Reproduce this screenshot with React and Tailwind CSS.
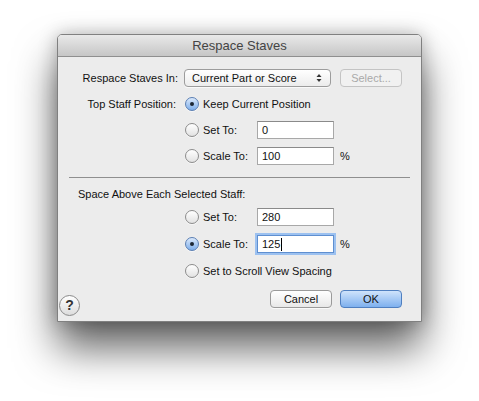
import React from "react";

const font = { fontFamily: '"Liberation Sans", Arial, sans-serif' };

const Radio = ({ checked }) => (
  <div
    className={
      checked
        ? "w-[14px] h-[14px] rounded-full border border-[#5b7fb3] bg-gradient-to-b from-[#dbe9fb] to-[#7eaeea] flex items-center justify-center shrink-0 shadow-[0_1px_0_rgba(255,255,255,0.6)]"
        : "w-[14px] h-[14px] rounded-full border border-[#8c8c8c] bg-gradient-to-b from-[#ffffff] to-[#e2e2e2] shrink-0 shadow-[0_1px_0_rgba(255,255,255,0.6)]"
    }
  >
    {checked && <div className="w-[4px] h-[4px] rounded-full bg-[#1c2633]" />}
  </div>
);

const Field = ({ value, focused }) => (
  <div
    className={
      focused
        ? "w-[77px] h-[18px] bg-white border border-[#5f8fd0] ring-2 ring-[#9cc1f0] flex items-center pl-[4px] text-[11px] text-[#111]"
        : "w-[77px] h-[18px] bg-white border border-[#a8a8a8] border-t-[#8a8a8a] flex items-center pl-[4px] text-[11px] text-[#111]"
    }
  >
    {value}
    {focused && <span className="inline-block w-px h-[13px] bg-black ml-[1px]" />}
  </div>
);

const Option = ({ checked, label, value, focused, percent }) => (
  <div className="flex items-center h-[18px]">
    <Radio checked={checked} />
    <span className="ml-[4px] w-[54px] whitespace-nowrap">{label}</span>
    {value !== undefined && <Field value={value} focused={focused} />}
    {percent && <span className="ml-[6px]">%</span>}
  </div>
);

export default function App() {
  return (
    <div className="w-[479px] h-[401px] bg-white pl-[57px] pt-[34px]" style={font}>
      <div className="w-[365px] h-[288px] bg-[#ececec] border border-[#808080] rounded-t-[5px] shadow-[0_26px_42px_rgba(0,0,0,0.62),0_0_18px_rgba(0,0,0,0.25)] flex flex-col text-[11px] text-[#111]">
        <div className="h-[22px] shrink-0 rounded-t-[4px] bg-gradient-to-b from-[#e9e9e9] to-[#c6c6c6] border-b border-[#8f8f8f] flex items-center justify-center text-[13px] text-[#444]">
          Respace Staves
        </div>

        <div className="flex items-center h-[18px] mt-[12px]">
          <div className="w-[120px] text-right">Respace Staves In:</div>
          <div className="ml-[6px] w-[147px] h-[18px] rounded-[4px] border border-[#9c9c9c] bg-gradient-to-b from-[#ffffff] to-[#ececec] flex items-center pl-[7px] pr-[8px] justify-between shadow-[0_1px_0_rgba(255,255,255,0.7)]">
            <span>Current Part or Score</span>
            <svg width="6" height="10" viewBox="0 0 6 10">
              <path d="M3 1 L5.5 4 L0.5 4 Z" fill="#333" />
              <path d="M3 9 L5.5 6 L0.5 6 Z" fill="#333" />
            </svg>
          </div>
          <div className="ml-[9px] w-[62px] h-[18px] rounded-[4px] border border-[#c4c4c4] bg-[#f1f1f1] flex items-center justify-center text-[#a9a9a9]">
            Select...
          </div>
        </div>

        <div className="flex items-center h-[18px] mt-[8px]">
          <div className="w-[118px] text-right">Top Staff Position:</div>
          <div className="ml-[9px] flex items-center">
            <Radio checked />
            <span className="ml-[4px]">Keep Current Position</span>
          </div>
        </div>

        <div className="pl-[127px] mt-[8px]">
          <Option label="Set To:" value="0" />
        </div>
        <div className="pl-[127px] mt-[8px]">
          <Option label="Scale To:" value="100" percent />
        </div>

        <div className="mx-[11px] mt-[12px] h-px bg-[#8f8f8f]" />

        <div className="pl-[20px] mt-[7px] h-[18px] flex items-center">
          Space Above Each Selected Staff:
        </div>

        <div className="pl-[127px] mt-[5px]">
          <Option label="Set To:" value="280" />
        </div>
        <div className="pl-[127px] mt-[9px]">
          <Option checked label="Scale To:" value="125" focused percent />
        </div>
        <div className="pl-[127px] mt-[9px]">
          <div className="flex items-center h-[18px]">
            <Radio />
            <span className="ml-[4px]">Set to Scroll View Spacing</span>
          </div>
        </div>

        <div className="flex justify-between items-start mt-[10px] pl-[1px] pr-[19px]">
          <div className="mt-[5px] w-[21px] h-[21px] rounded-full border border-[#8a8a8a] bg-gradient-to-b from-[#ffffff] to-[#dcdcdc] flex items-center justify-center text-[14px] font-bold text-[#333]">
            ?
          </div>
          <div className="flex">
            <div className="w-[62px] h-[18px] rounded-[4px] border border-[#9a9a9a] bg-gradient-to-b from-[#ffffff] to-[#e8e8e8] flex items-center justify-center shadow-[0_1px_0_rgba(255,255,255,0.7)]">
              Cancel
            </div>
            <div className="ml-[8px] w-[62px] h-[18px] rounded-[4px] border border-[#4f7fc0] bg-gradient-to-b from-[#cfe3fb] to-[#7eb0ee] flex items-center justify-center">
              OK
            </div>
          </div>
        </div>
      </div>
    </div>
  );
}
